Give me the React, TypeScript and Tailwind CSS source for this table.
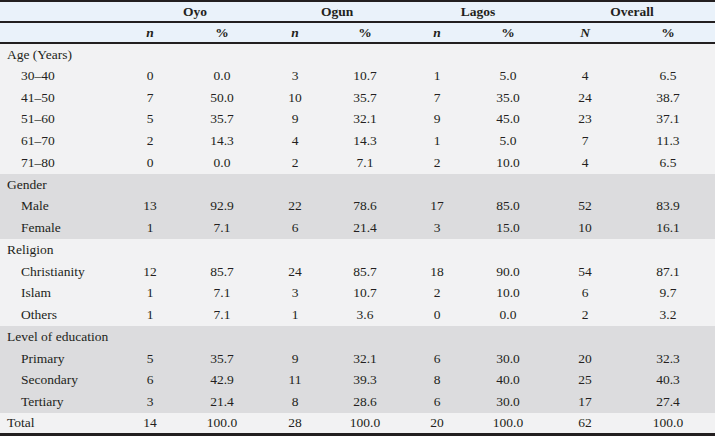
type Row = { label: string; vals?: string[]; indent?: boolean };
type Group = { shade: boolean; rows: Row[] };

const groups: Group[] = [
  {
    shade: false,
    rows: [
      { label: "Age (Years)" },
      { label: "30–40", indent: true, vals: ["0", "0.0", "3", "10.7", "1", "5.0", "4", "6.5"] },
      { label: "41–50", indent: true, vals: ["7", "50.0", "10", "35.7", "7", "35.0", "24", "38.7"] },
      { label: "51–60", indent: true, vals: ["5", "35.7", "9", "32.1", "9", "45.0", "23", "37.1"] },
      { label: "61–70", indent: true, vals: ["2", "14.3", "4", "14.3", "1", "5.0", "7", "11.3"] },
      { label: "71–80", indent: true, vals: ["0", "0.0", "2", "7.1", "2", "10.0", "4", "6.5"] },
    ],
  },
  {
    shade: true,
    rows: [
      { label: "Gender" },
      { label: "Male", indent: true, vals: ["13", "92.9", "22", "78.6", "17", "85.0", "52", "83.9"] },
      { label: "Female", indent: true, vals: ["1", "7.1", "6", "21.4", "3", "15.0", "10", "16.1"] },
    ],
  },
  {
    shade: false,
    rows: [
      { label: "Religion" },
      { label: "Christianity", indent: true, vals: ["12", "85.7", "24", "85.7", "18", "90.0", "54", "87.1"] },
      { label: "Islam", indent: true, vals: ["1", "7.1", "3", "10.7", "2", "10.0", "6", "9.7"] },
      { label: "Others", indent: true, vals: ["1", "7.1", "1", "3.6", "0", "0.0", "2", "3.2"] },
    ],
  },
  {
    shade: true,
    rows: [
      { label: "Level of education" },
      { label: "Primary", indent: true, vals: ["5", "35.7", "9", "32.1", "6", "30.0", "20", "32.3"] },
      { label: "Secondary", indent: true, vals: ["6", "42.9", "11", "39.3", "8", "40.0", "25", "40.3"] },
      { label: "Tertiary", indent: true, vals: ["3", "21.4", "8", "28.6", "6", "30.0", "17", "27.4"] },
    ],
  },
  {
    shade: false,
    rows: [{ label: "Total", vals: ["14", "100.0", "28", "100.0", "20", "100.0", "62", "100.0"] }],
  },
];

const widths = ["w-[123px]", "w-[54px]", "w-[90px]", "w-[56px]", "w-[84px]", "w-[60px]", "w-[82px]", "w-[72px]", "w-[94px]"];
const sub = ["n", "%", "n", "%", "n", "%", "N", "%"];

export default function App() {
  return (
    <div className="w-[715px] h-[436px] bg-[#f2f2f3] text-[#231f20] text-[13.5px] leading-none [font-family:'Liberation_Serif',serif]">
      <table className="w-[715px] border-collapse table-fixed">
        <colgroup>
          {widths.map((w, i) => (
            <col key={i} className={w} />
          ))}
        </colgroup>
        <thead className="bg-[#eaf2fa] font-bold">
          <tr className="h-[21px] border-t-2 border-b-2 border-[#231f20]">
            <th />
            {["Oyo", "Ogun", "Lagos", "Overall"].map((h) => (
              <th key={h} colSpan={2} className="text-center font-bold">
                {h}
              </th>
            ))}
          </tr>
          <tr className="h-[21px] border-b-2 border-[#231f20]">
            <th />
            {sub.map((s, i) => (
              <th key={i} className={`text-center font-bold ${s === "%" ? "" : "italic"}`}>
                {s}
              </th>
            ))}
          </tr>
        </thead>
        <tbody>
          {groups.map((g, gi) =>
            g.rows.map((r, ri) => (
              <tr
                key={`${gi}-${ri}`}
                className={`h-[21.75px] ${g.shade ? "bg-[#dcdcde]" : "bg-[#f2f2f3]"} ${r.label === "Total" ? "border-b-[3px] border-[#231f20]" : ""}`}
              >
                <td className={r.indent ? "pl-[21px]" : "pl-[7px]"}>{r.label}</td>
                {Array.from({ length: 8 }, (_, i) => (
                  <td key={i} className="text-center">
                    {r.vals ? r.vals[i] : ""}
                  </td>
                ))}
              </tr>
            ))
          )}
        </tbody>
      </table>
    </div>
  );
}
